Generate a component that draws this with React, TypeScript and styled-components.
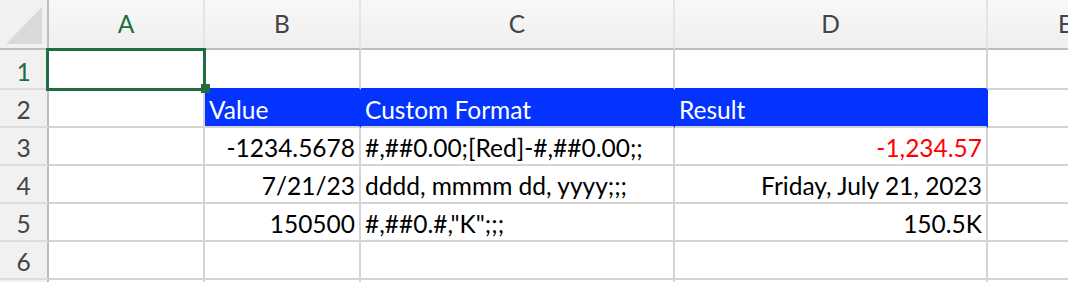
import * as React from 'react';
import styled, { createGlobalStyle, css } from 'styled-components';

const GlobalStyle = createGlobalStyle`
html, body {
  margin: 0;
  padding: 0;
  background: #ffffff;
  overflow: hidden;
}
body {
  font-family: Lato, "Open Sans", "Liberation Sans", sans-serif;
}
`;

const GRID = '#d4d4d4';
const HEAD_LINE = '#bdbdbd';
const GREEN = '#1f6c41';
const BLUE = '#0433ff';

const Sheet = styled.div`
  display: grid;
  grid-template-columns: 49px 156px 156px 314px 313px 156px;
  grid-template-rows: 50px 40px repeat(6, 38px);
  width: 1068px;
  height: 282px;
  overflow: hidden;
  font-size: 24.5px;
  line-height: 1;
`;

const Corner = styled.div`
  box-sizing: border-box;
  background: #f1f1f1;
  border-right: 2px solid ${HEAD_LINE};
  border-bottom: 2px solid ${HEAD_LINE};
  display: flex;
  align-items: flex-end;
  justify-content: flex-end;
  padding: 0 4px 3px 0;
`;

const ColHead = styled.div<{ $active?: boolean }>`
  box-sizing: border-box;
  background: linear-gradient(#f8f8f8, #efefef);
  border-right: 2px solid #e4e4e4;
  border-bottom: 2px solid ${HEAD_LINE};
  display: flex;
  align-items: flex-end;
  justify-content: center;
  padding-bottom: 12px;
  color: ${(p) => (p.$active ? GREEN : '#444444')};
`;

const RowHead = styled.div<{ $active?: boolean }>`
  box-sizing: border-box;
  background: #f1f1f1;
  border-right: 2px solid ${HEAD_LINE};
  border-bottom: 2px solid #dcdcdc;
  display: flex;
  align-items: flex-end;
  justify-content: center;
  padding-bottom: 4px;
  color: ${(p) => (p.$active ? GREEN : '#444444')};
`;

const Cell = styled.div<{ $right?: boolean; $fill?: boolean; $red?: boolean; $blueBelow?: boolean }>`
  position: relative;
  box-sizing: border-box;
  border-right: 2px solid ${GRID};
  border-bottom: 2px solid ${GRID};
  display: flex;
  align-items: flex-end;
  justify-content: ${(p) => (p.$right ? 'flex-end' : 'flex-start')};
  padding: 0 4px 4px 4px;
  white-space: nowrap;
  color: ${(p) => (p.$red ? '#ff0000' : '#000000')};
  ${(p) =>
    p.$fill &&
    css`
      background: ${BLUE};
      border-right-color: ${BLUE};
      color: #ffffff;
    `}
  ${(p) =>
    p.$blueBelow &&
    css`
      border-bottom-color: ${BLUE};
    `}
`;

const Selection = styled.div`
  position: absolute;
  z-index: 2;
  left: -3px;
  top: -2px;
  width: 160px;
  height: 43px;
  box-sizing: border-box;
  border: 3px solid ${GREEN};
  pointer-events: none;
`;

const FillHandle = styled.div`
  position: absolute;
  left: 152px;
  top: 33px;
  width: 9px;
  height: 9px;
  background: ${GREEN};
`;

const cols = ['A', 'B', 'C', 'D', 'E'];

type Row = { b?: string; c?: string; d?: string; head?: boolean; red?: boolean };

const rows: Row[] = [
  {},
  { b: 'Value', c: 'Custom Format', d: 'Result', head: true },
  { b: '-1234.5678', c: '#,##0.00;[Red]-#,##0.00;;', d: '-1,234.57', red: true },
  { b: '7/21/23', c: 'dddd, mmmm dd, yyyy;;;', d: 'Friday, July 21, 2023' },
  { b: '150500', c: '#,##0.#,"K";;;', d: '150.5K' },
  {},
];

export default function App() {
  return (
    <>
      <GlobalStyle />
      <Sheet>
        <Corner>
          <svg width="37" height="38" viewBox="0 0 37 38">
            <polygon points="36,0 36,37 0,37" fill="#d9d9d9" />
          </svg>
        </Corner>
        {cols.map((c) => (
          <ColHead key={c} $active={c === 'A'}>
            {c}
          </ColHead>
        ))}
        {rows.map((r, i) => {
          const next = rows[i + 1];
          const blueBelow = !!next?.head;
          return (
            <React.Fragment key={i}>
              <RowHead $active={i === 0}>{i + 1}</RowHead>
              <Cell>
                {i === 0 && (
                  <Selection>
                    <FillHandle />
                  </Selection>
                )}
              </Cell>
              <Cell $right={!r.head} $fill={r.head} $blueBelow={blueBelow}>
                {r.b}
              </Cell>
              <Cell $fill={r.head} $blueBelow={blueBelow}>
                {r.c}
              </Cell>
              <Cell $right={!r.head} $fill={r.head} $red={r.red} $blueBelow={blueBelow}>
                {r.d}
              </Cell>
              <Cell />
            </React.Fragment>
          );
        })}
        {/* row 7: only its top edge shows in the window */}
        <RowHead />
        {cols.map((c) => (
          <Cell key={c} />
        ))}
      </Sheet>
    </>
  );
}
